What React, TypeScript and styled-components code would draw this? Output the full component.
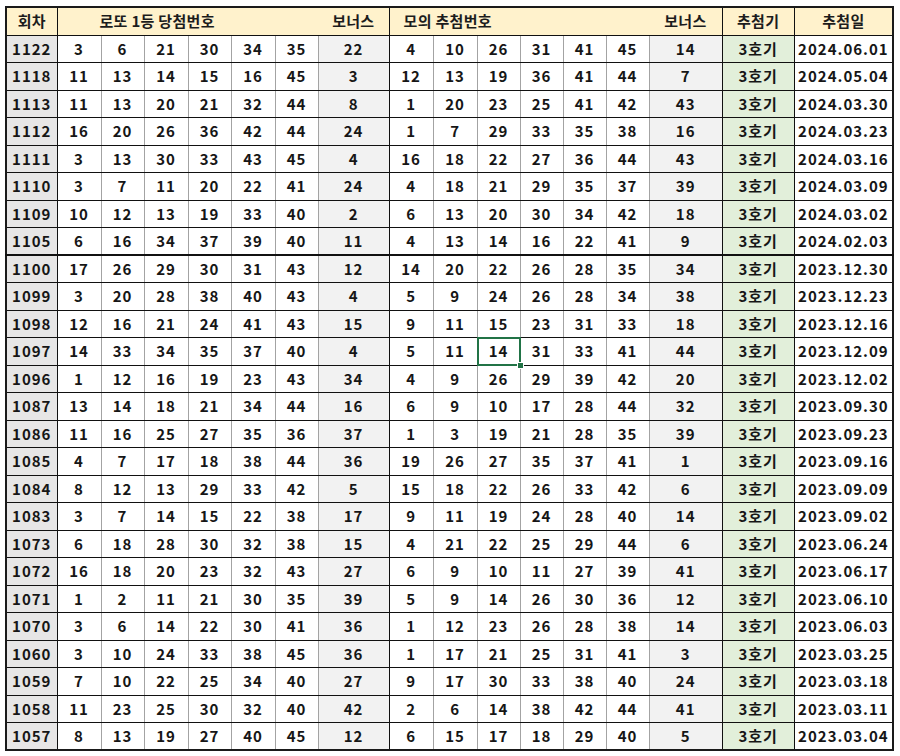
import styled, { createGlobalStyle } from 'styled-components'

const GlobalStyle = createGlobalStyle`
	html, body {
		margin: 0;
		padding: 0;
		background: #ffffff;
	}
	body {
		font-family: "Noto Sans CJK KR", "Noto Sans", sans-serif;
		color: #111111;
	}
`

type Draw = {
	round: number
	win: number[]
	bonus: number
	mock: number[]
	mockBonus: number
	date: string
}

const draws: Draw[] = [
	{ round: 1122, win: [3, 6, 21, 30, 34, 35], bonus: 22, mock: [4, 10, 26, 31, 41, 45], mockBonus: 14, date: '2024.06.01' },
	{ round: 1118, win: [11, 13, 14, 15, 16, 45], bonus: 3, mock: [12, 13, 19, 36, 41, 44], mockBonus: 7, date: '2024.05.04' },
	{ round: 1113, win: [11, 13, 20, 21, 32, 44], bonus: 8, mock: [1, 20, 23, 25, 41, 42], mockBonus: 43, date: '2024.03.30' },
	{ round: 1112, win: [16, 20, 26, 36, 42, 44], bonus: 24, mock: [1, 7, 29, 33, 35, 38], mockBonus: 16, date: '2024.03.23' },
	{ round: 1111, win: [3, 13, 30, 33, 43, 45], bonus: 4, mock: [16, 18, 22, 27, 36, 44], mockBonus: 43, date: '2024.03.16' },
	{ round: 1110, win: [3, 7, 11, 20, 22, 41], bonus: 24, mock: [4, 18, 21, 29, 35, 37], mockBonus: 39, date: '2024.03.09' },
	{ round: 1109, win: [10, 12, 13, 19, 33, 40], bonus: 2, mock: [6, 13, 20, 30, 34, 42], mockBonus: 18, date: '2024.03.02' },
	{ round: 1105, win: [6, 16, 34, 37, 39, 40], bonus: 11, mock: [4, 13, 14, 16, 22, 41], mockBonus: 9, date: '2024.02.03' },
	{ round: 1100, win: [17, 26, 29, 30, 31, 43], bonus: 12, mock: [14, 20, 22, 26, 28, 35], mockBonus: 34, date: '2023.12.30' },
	{ round: 1099, win: [3, 20, 28, 38, 40, 43], bonus: 4, mock: [5, 9, 24, 26, 28, 34], mockBonus: 38, date: '2023.12.23' },
	{ round: 1098, win: [12, 16, 21, 24, 41, 43], bonus: 15, mock: [9, 11, 15, 23, 31, 33], mockBonus: 18, date: '2023.12.16' },
	{ round: 1097, win: [14, 33, 34, 35, 37, 40], bonus: 4, mock: [5, 11, 14, 31, 33, 41], mockBonus: 44, date: '2023.12.09' },
	{ round: 1096, win: [1, 12, 16, 19, 23, 43], bonus: 34, mock: [4, 9, 26, 29, 39, 42], mockBonus: 20, date: '2023.12.02' },
	{ round: 1087, win: [13, 14, 18, 21, 34, 44], bonus: 16, mock: [6, 9, 10, 17, 28, 44], mockBonus: 32, date: '2023.09.30' },
	{ round: 1086, win: [11, 16, 25, 27, 35, 36], bonus: 37, mock: [1, 3, 19, 21, 28, 35], mockBonus: 39, date: '2023.09.23' },
	{ round: 1085, win: [4, 7, 17, 18, 38, 44], bonus: 36, mock: [19, 26, 27, 35, 37, 41], mockBonus: 1, date: '2023.09.16' },
	{ round: 1084, win: [8, 12, 13, 29, 33, 42], bonus: 5, mock: [15, 18, 22, 26, 33, 42], mockBonus: 6, date: '2023.09.09' },
	{ round: 1083, win: [3, 7, 14, 15, 22, 38], bonus: 17, mock: [9, 11, 19, 24, 28, 40], mockBonus: 14, date: '2023.09.02' },
	{ round: 1073, win: [6, 18, 28, 30, 32, 38], bonus: 15, mock: [4, 21, 22, 25, 29, 44], mockBonus: 6, date: '2023.06.24' },
	{ round: 1072, win: [16, 18, 20, 23, 32, 43], bonus: 27, mock: [6, 9, 10, 11, 27, 39], mockBonus: 41, date: '2023.06.17' },
	{ round: 1071, win: [1, 2, 11, 21, 30, 35], bonus: 39, mock: [5, 9, 14, 26, 30, 36], mockBonus: 12, date: '2023.06.10' },
	{ round: 1070, win: [3, 6, 14, 22, 30, 41], bonus: 36, mock: [1, 12, 23, 26, 28, 38], mockBonus: 14, date: '2023.06.03' },
	{ round: 1060, win: [3, 10, 24, 33, 38, 45], bonus: 36, mock: [1, 17, 21, 25, 31, 41], mockBonus: 3, date: '2023.03.25' },
	{ round: 1059, win: [7, 10, 22, 25, 34, 40], bonus: 27, mock: [9, 17, 30, 33, 38, 40], mockBonus: 24, date: '2023.03.18' },
	{ round: 1058, win: [11, 23, 25, 30, 32, 40], bonus: 42, mock: [2, 6, 14, 38, 42, 44], mockBonus: 41, date: '2023.03.11' },
	{ round: 1057, win: [8, 13, 19, 27, 40, 45], bonus: 12, mock: [6, 15, 17, 18, 29, 40], mockBonus: 5, date: '2023.03.04' },
]

// the green excel cursor sits on 1097 / mock #3
const SELECTED_ROUND = 1097
const SELECTED_MOCK = 2
// thicker divider drawn above this round
const SPLIT_ROUND = 1100

const Sheet = styled.div`
	padding: 6px 0 0 5px;
`

const Table = styled.table`
	border-collapse: collapse;
	table-layout: fixed;
	width: 889px;
	border: 2px solid #1a1a1a;
	font-weight: 700;
	font-size: 15px;
	line-height: 1;
`

const HeadRow = styled.tr`
	height: 28px;
	background: #fff2cc;
`

const HeadCell = styled.th<{ $indent?: number; $open?: boolean }>`
	padding: 0 0 1px ${(p) => (p.$indent ? p.$indent + 'px' : '0')};
	text-align: ${(p) => (p.$indent ? 'left' : 'center')};
	font-weight: 700;
	font-size: 15px;
	letter-spacing: 0.3px;
	color: #1c1c1c;
	border-bottom: 1px solid #111;
	border-right: ${(p) => (p.$open ? 'none' : '1px solid #111')};
	white-space: pre;
`

const Row = styled.tr<{ $split?: boolean }>`
	height: 27.5px;
	& > td {
		border-top: ${(p) => (p.$split ? '2px solid #111' : '1px solid #111')};
	}
`

type Tone = 'plain' | 'round' | 'bonus' | 'machine'

const tones: Record<Tone, string> = {
	plain: '#ffffff',
	round: '#e7e6e6',
	bonus: '#f2f2f2',
	machine: '#e2efda',
}

const Cell = styled.td<{ $tone?: Tone; $edge?: boolean; $selected?: boolean }>`
	position: relative;
	padding: 0 0 1px 0;
	text-align: center;
	letter-spacing: 1px;
	color: #161616;
	background: ${(p) => tones[p.$tone || 'plain']};
	border-bottom: 1px solid #111;
	border-right: 1px solid ${(p) => (p.$edge ? '#111' : '#a3a3a3')};

	${(p) =>
		p.$selected &&
		`
		&::after {
			content: '';
			position: absolute;
			inset: -1px -1px -1px -1px;
			border: 2px solid #217346;
			pointer-events: none;
		}
		&::before {
			content: '';
			position: absolute;
			right: -4px;
			bottom: -4px;
			width: 5px;
			height: 5px;
			background: #217346;
			border: 1px solid #ffffff;
			z-index: 1;
		}
	`}
`

const winCols = [44, 43, 44, 43, 44, 43]
const mockCols = [44, 44, 43, 43, 43, 43]

const App = () => {
	return (
		<>
			<GlobalStyle />
			<Sheet>
				<Table>
					<colgroup>
						<col style={{ width: 51 }} />
						{winCols.map((w, i) => (
							<col key={'w' + i} style={{ width: w }} />
						))}
						<col style={{ width: 71 }} />
						{mockCols.map((w, i) => (
							<col key={'m' + i} style={{ width: w }} />
						))}
						<col style={{ width: 73 }} />
						<col style={{ width: 72 }} />
						<col style={{ width: 99 }} />
					</colgroup>
					<thead>
						<HeadRow>
							<HeadCell>회차</HeadCell>
							<HeadCell colSpan={6} $indent={42} $open>
								로또 1등 당첨번호
							</HeadCell>
							<HeadCell>보너스</HeadCell>
							<HeadCell colSpan={6} $indent={14} $open>
								모의 추첨번호
							</HeadCell>
							<HeadCell>보너스</HeadCell>
							<HeadCell>추첨기</HeadCell>
							<HeadCell>추첨일</HeadCell>
						</HeadRow>
					</thead>
					<tbody>
						{draws.map((d) => (
							<Row key={d.round} $split={d.round === SPLIT_ROUND}>
								<Cell $tone="round" $edge>
									{d.round}
								</Cell>
								{d.win.map((n, i) => (
									<Cell key={'w' + i}>{n}</Cell>
								))}
								<Cell $tone="bonus" $edge>
									{d.bonus}
								</Cell>
								{d.mock.map((n, i) => (
									<Cell
										key={'m' + i}
										$selected={d.round === SELECTED_ROUND && i === SELECTED_MOCK}
									>
										{n}
									</Cell>
								))}
								<Cell $tone="bonus" $edge>
									{d.mockBonus}
								</Cell>
								<Cell $tone="machine" $edge>
									3호기
								</Cell>
								<Cell>{d.date}</Cell>
							</Row>
						))}
					</tbody>
				</Table>
			</Sheet>
		</>
	)
}

export default App
